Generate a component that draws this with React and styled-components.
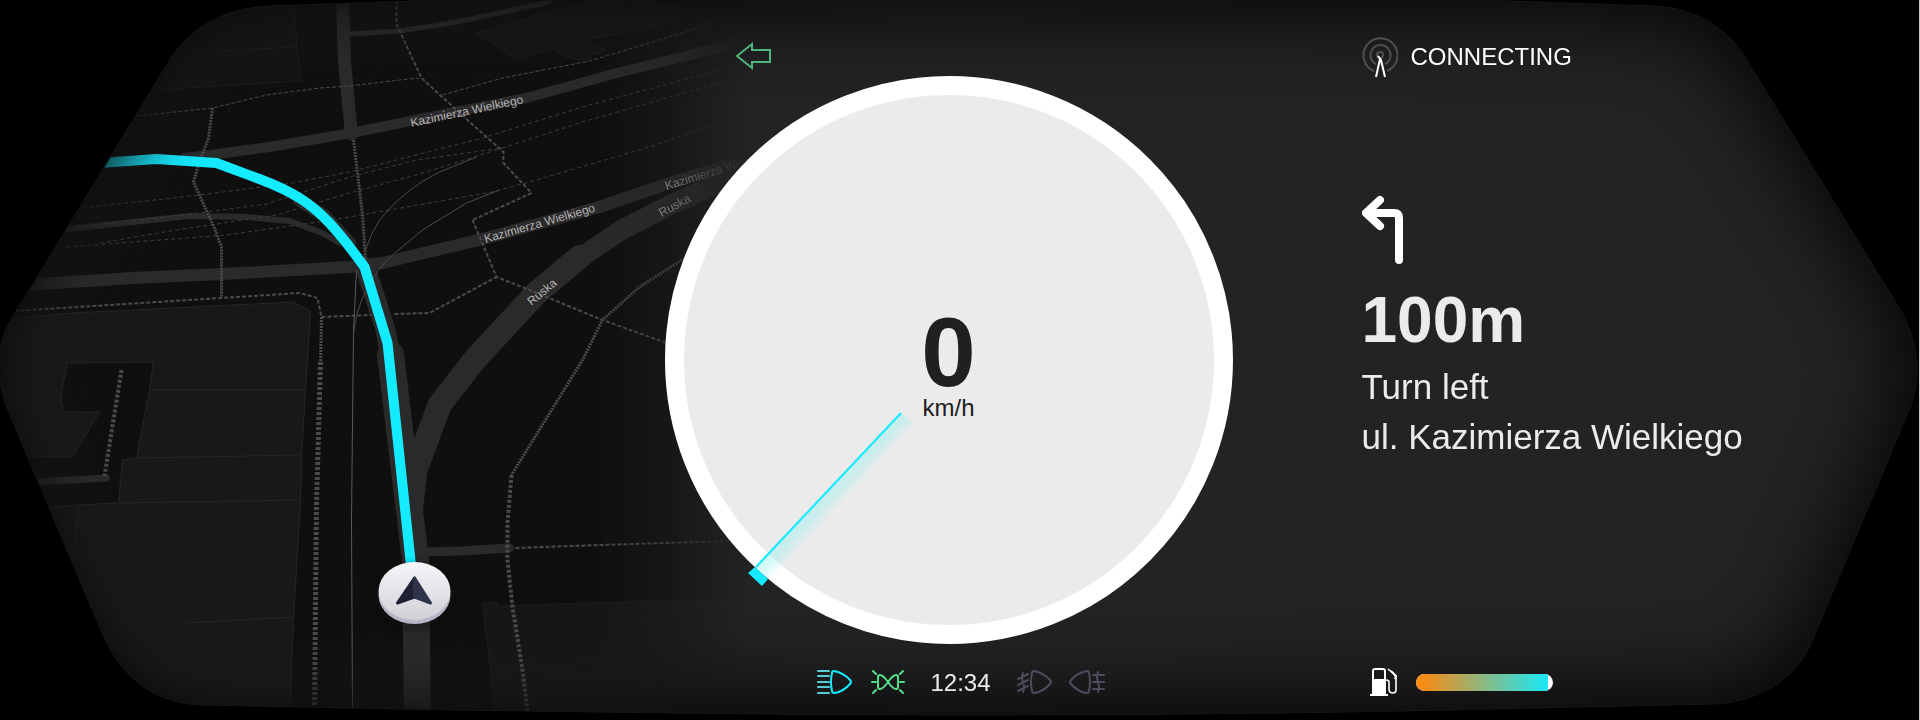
import React from "react";
import styled, { createGlobalStyle } from "styled-components";

const GlobalStyle = createGlobalStyle`
  * { box-sizing: border-box; }
  body {
    margin: 0;
    background: #000;
    font-family: "Liberation Sans", Arial, sans-serif;
    color: #ebebeb;
  }
  p, h1 { margin: 0; }
`;

const Cluster = styled.main`
  position: relative;
  display: grid;
  grid-template-columns: 665fr 568px 687fr;
  min-height: 100vh;
  overflow: hidden;
  border-right: 1px solid #c8c8c8;
`;

const Backdrop = styled.svg`
  position: absolute;
  inset: 0;
  width: 100%;
  height: 100%;
`;

const CenterColumn = styled.section`
  grid-column: 2;
  position: relative;
  display: flex;
  flex-direction: column;
  justify-content: space-between;
`;

const IndicatorBar = styled.div`
  display: flex;
  align-items: flex-start;
  height: 76px;
  padding: 36px 70px 0;
`;

const Dial = styled.div`
  position: relative;
  width: 100%;
  aspect-ratio: 1;
`;

const DialFace = styled.div`
  display: flex;
  flex-direction: column;
  align-items: center;
  justify-content: center;
  height: 100%;
  padding-top: 8px;
  border: 19px solid #fff;
  border-radius: 50%;
  background: #ebebeb;
  color: #202022;
`;

const Speed = styled.p`
  font-size: 98px;
  line-height: 88px;
  font-weight: 700;
`;

const Unit = styled.p`
  font-size: 24px;
  line-height: 24px;
`;

const Needle = styled.svg`
  position: absolute;
  inset: 0;
  width: 100%;
  height: 100%;
  overflow: visible;
`;

const StatusBar = styled.div`
  display: flex;
  align-items: center;
  gap: 26px;
  height: 76px;
  padding-left: 152px;
`;

const LampGroup = styled.div`
  display: flex;
  align-items: center;
  gap: 16px;
`;

const LampIcon = styled.svg`
  display: block;
  flex: none;
  fill: none;
  stroke: ${(p) => p.$color};
  stroke-width: 2;
  stroke-linecap: round;
  stroke-linejoin: round;
`;

const Clock = styled.time`
  font-size: 24px;
  line-height: 28px;
  padding-top: 2px;
`;

const InfoColumn = styled.section`
  grid-column: 3;
  position: relative;
  display: flex;
  flex-direction: column;
  justify-content: space-between;
  padding-left: 129px;
`;

const Connection = styled.div`
  display: flex;
  align-items: center;
  gap: 13px;
  height: 76px;
  padding-top: 38px;
  color: #fff;
  font-size: 24px;
  line-height: 28px;
`;

const Directions = styled.div`
  display: flex;
  flex-direction: column;
  padding-bottom: 64px;
  > svg { margin-bottom: 20px; }
`;

const Distance = styled.h1`
  font-size: 64px;
  line-height: 72px;
  font-weight: 700;
  margin-bottom: 6px;
`;

const Step = styled.p`
  font-size: 35px;
  line-height: 50px;
  white-space: nowrap;
`;

const Fuel = styled.div`
  display: flex;
  align-items: center;
  gap: 18px;
  height: 76px;
  padding-left: 8px;
`;

const FuelTrack = styled.div`
  width: 137px;
  height: 17px;
  border-radius: 9px;
  overflow: hidden;
  background: #fff;
`;

const FuelLevel = styled.div`
  height: 100%;
  background: linear-gradient(90deg, #f98a12 5%, #1fe6f2 97%);
`;

const HULL =
  "M270 6 C228 8 198 24 177 50 Q172 57 167 65 L28 293 C8 324 -1 334 0 372 Q1 393 7 407 L100 627 C118 672 148 702 200 705 L400 709 Q760 715 960 715 Q1200 715 1400 711 L1715 704 C1762 701 1798 678 1813 640 L1908 414 C1920 388 1922 352 1904 315 L1751 66 C1732 30 1698 8 1655 6 L1480 0 Q960 -8 440 0 Z";

const roads = [
  { w: 13, d: "M343 0 L345 62 L352 134" },
  { w: 10, d: "M185 158 L218 154 L270 147 L352 133 L450 113 L527 98 L617 73 L683 57 L735 43" },
  { w: 12, d: "M25 285 L133 278 L222 274 L350 267 L383 263 L483 239 L600 207 L667 184 L740 162" },
  { w: 6, d: "M60 230 L133 222 L190 216 L247 217 L290 221 L323 233 L340 243" },
  { w: 5, d: "M350 34 L400 31 L457 22 L550 2" },
  { w: 7, d: "M34 482 L107 478" },
  { w: 9, d: "M425 552 L460 551 L510 548" },
  { w: 13, d: "M300 200 L325 216 L350 243" },
  { w: 20, d: "M366 268 L386 330 L392 362" },
  { w: 27, d: "M391 355 L416 560 L418 720" },
  { w: 24, d: "M412 505 L416 470 L440 405 L475 360 L537 293 L580 257" },
  { w: 20, d: "M570 265 L622 230 L673 204 L720 183 L750 168" },
];

const tracks = [
  "M83 208 L200 195 L293 183 L350 172 L483 138 L583 107 L727 68",
  "M77 227 L200 213 L267 204 L350 177 L417 160 L503 148 L583 122 L730 80",
  "M100 243 L177 230 L277 215 L350 193 L420 174 L503 148",
  "M67 247 L227 235 L333 220 L350 217 L493 192 L530 182 L650 147 L723 122",
];

const paths = [
  { w: 1, d: "M137 116 L213 108 L267 95 L320 88 L350 86 L400 80 L421 78" },
  { w: 3, d: "M213 108 L209 138 L199 165 L194 182 L215 228 L222 247 L222 298" },
  { w: 2, d: "M15 311 L222 298 L300 293 L318 298 L322 317" },
  { w: 3, d: "M322 317 L321 362" },
  { w: 5, d: "M321 362 L317 503 L315 708" },
  { w: 2, d: "M322 317 L372 315 M395 314 L430 313 L497 277" },
  { w: 2, d: "M473 220 L497 277 L530 290 L603 320 L667 343" },
  { w: 2, d: "M397 0 L397 24 L422 78 L468 120 L504 152 L504 163 L532 193 L473 220" },
  { w: 1, d: "M443 95 L503 78 L590 61 L650 43 L717 22" },
  { w: 3, d: "M354 140 L363 215 L366 260" },
  { w: 3, d: "M690 255 L640 287 L603 320 L583 360 L512 475" },
  { w: 4, d: "M512 475 L508 523 L508 560 L513 607 L523 670 L528 712" },
  { w: 2, d: "M516 548 L600 545 L732 541" },
  { w: 4, d: "M122 370 L105 476" },
];

const labels = [
  { x: 412, y: 127, a: -12, t: "Kazimierza Wielkiego" },
  { x: 486, y: 243, a: -16, t: "Kazimierza Wielkiego" },
  { x: 667, y: 190, a: -17, t: "Kazimierza Wielkiego" },
  { x: 532, y: 306, a: -40, t: "Ruska" },
  { x: 662, y: 217, a: -28, t: "Ruska" },
];

function MapLayer() {
  return (
    <g clipPath="url(#hullClip)">
      <g mask="url(#mapMask)">
        <rect width="760" height="720" fill="#0f0f0f" />
        <g fill="#181818" stroke="#262626">
          <path fill="#131314" stroke="#1e1e1e" d="M120 -5 L295 -5 L297 47 L302 81 L120 92 Z M120 56 L297 47" />
          <path d="M-5 320 L72 313 L293 302 L311 311 L308 360 L306 390 L302 457 L301 502 L294 617 L290 720 L-5 720 Z" />
          <path fill="#0f0f0f" d="M68 363 L154 362 L150 390 L137 458 L123 460 L119 503 L79 505 L20 509 L20 457 L73 457 L100 412 L65 412 L61 398 Z" />
          <path fill="none" d="M150 390 H306 M137 458 L302 455 M119 503 L301 500 M186 623 L294 617 M79 505 L74 560" />
          <path fill="#161617" stroke="#1e1e1e" d="M483 603 L498 603 L498 606 L683 600 L770 598 L770 720 L497 720 Z" />
          <path fill="#131414" stroke="#1c1d1d" d="M540 15 L477 33 L517 60 L553 49 Q567 61 590 59 L592 55 L607 50 L587 39 L657 27 L700 10 L610 -5 Z" />
        </g>
        <g fill="none" stroke="#2b2a2b" strokeLinejoin="round" strokeLinecap="round">
          {roads.map((r) => <path key={r.d} d={r.d} strokeWidth={r.w} />)}
        </g>
        <g fill="none" stroke="#3c3c3c" strokeWidth="1" strokeDasharray="4 3">
          {tracks.map((d) => <path key={d} d={d} />)}
        </g>
        <g fill="none" stroke="#4a4a4a">
          {paths.map((p) => (
            <path key={p.d} d={p.d} strokeWidth={p.w} strokeDasharray={p.w > 3 ? "3 2" : p.w > 2 ? "2 1" : "4 2"} />
          ))}
        </g>
        <g fill="none" stroke="#4b4b4b">
          <path d="M357 270 L354 330 L352 520 L353 712" stroke="#5a5a5a" />
          <path d="M366 250 Q370 236 380 220 Q406 188 440 172 L477 157" />
          <path d="M354 333 Q357 308 367 290 Q378 268 393 255 L423 230 L467 203 L500 190" />
        </g>
        <path
          d="M100 163 L157 159 L217 163 L260 179 Q284 188 300 198 Q316 208 330 223 Q344 238 365 267 L388 343 L412 570"
          fill="none" stroke="#14ebff" strokeWidth="10" strokeLinejoin="round"
        />
        <g fill="#b4b4b4" fontSize="12" fontFamily='"Liberation Sans", Arial, sans-serif'>
          {labels.map((l) => (
            <text key={l.x} transform={`translate(${l.x} ${l.y}) rotate(${l.a})`}>{l.t}</text>
          ))}
        </g>
      </g>
      <ellipse cx="415" cy="596" rx="40" ry="32" fill="#08080c" opacity="0.5" filter="url(#soft)" />
      <ellipse cx="415" cy="595" rx="36" ry="29" fill="#b7b5c6" />
      <ellipse cx="415" cy="591" rx="36" ry="29" fill="url(#puck)" />
      <g strokeWidth="3" strokeLinejoin="round">
        <path d="M415 578 L398 603 L415 597 Z" fill="#1e2133" stroke="#1e2133" />
        <path d="M415 578 L431 603 L415 597 Z" fill="#2f334a" stroke="#2f334a" />
      </g>
    </g>
  );
}

function Scene() {
  return (
    <Backdrop viewBox="0 0 1920 720" preserveAspectRatio="xMidYMid slice" aria-hidden="true">
      <defs>
        <clipPath id="hullClip"><path d={HULL} /></clipPath>
        <filter id="inset" filterUnits="userSpaceOnUse" x="-200" y="-200" width="2320" height="1120">
          <feGaussianBlur stdDeviation="48" />
        </filter>
        <filter id="edge" filterUnits="userSpaceOnUse" x="-200" y="-200" width="2320" height="1120">
          <feGaussianBlur stdDeviation="34" />
        </filter>
        <filter id="soft"><feGaussianBlur stdDeviation="4" /></filter>
        <linearGradient id="mapFade" gradientUnits="userSpaceOnUse" x1="0" x2="760" y1="0" y2="0">
          <stop offset="0" stopColor="#fff" />
          <stop offset="0.78" stopColor="#fff" />
          <stop offset="0.88" stopColor="#999" />
          <stop offset="0.98" stopColor="#000" />
        </linearGradient>
        <mask id="mapMask" maskUnits="userSpaceOnUse" x="0" y="0" width="760" height="720">
          <rect width="760" height="720" fill="url(#mapFade)" />
          <path
            d={`M-400 -400 H2400 V1200 H-400 Z ${HULL}`}
            fillRule="evenodd" stroke="#000" strokeWidth="28" filter="url(#edge)"
          />
        </mask>
        <linearGradient id="puck" x1="0" x2="0" y1="0" y2="1">
          <stop offset="0" stopColor="#f6f6fa" />
          <stop offset="1" stopColor="#cfcfd5" />
        </linearGradient>
      </defs>
      <g clipPath="url(#hullClip)">
        <rect width="1920" height="720" fill="#232325" />
        <path
          d={`M-400 -400 H2400 V1200 H-400 Z ${HULL}`}
          fillRule="evenodd" stroke="#000" strokeWidth="12" filter="url(#inset)"
        />
      </g>
      <MapLayer />
      <path d={HULL} fill="none" stroke="#161617" strokeWidth="1" />
    </Backdrop>
  );
}

const LAMP = "M17 2 Q15 2 15 4 Q13 13 15 22 Q15 24 18 24 Q27 22 33 15 Q35 13 33 11 Q27 4 17 2 Z";

export default function App() {
  return (
    <>
      <GlobalStyle />
      <Cluster>
        <Scene />
        <CenterColumn>
          <IndicatorBar>
            <svg width="37" height="40" viewBox="0 0 37 40" role="img" aria-label="Left indicator" fill="none" stroke="#4cb47c" strokeWidth="2">
              <path d="M2 20 L17 8 V14 H35 V26 H17 V32 Z" />
            </svg>
          </IndicatorBar>
          <Dial>
            <DialFace>
              <Speed>0</Speed>
              <Unit>km/h</Unit>
            </DialFace>
            <Needle viewBox="0 0 568 568" aria-hidden="true">
              <defs>
                <linearGradient id="glow" gradientUnits="userSpaceOnUse" x1="164" y1="414" x2="178" y2="427">
                  <stop offset="0" stopColor="#9ff0f0" stopOpacity="0.5" />
                  <stop offset="0.45" stopColor="#9ff0f0" stopOpacity="0.38" />
                  <stop offset="1" stopColor="#9ff0f0" stopOpacity="0" />
                </linearGradient>
              </defs>
              <path d="M236 337 L248 346 L109 509 L91 491 Z" fill="url(#glow)" />
              <path d="M236 337 L91 491" stroke="#14ebff" strokeWidth="2" />
              <path d="M83 497 L90 491 L103 503 L97 510 Z" fill="#14ebff" />
            </Needle>
          </Dial>
          <StatusBar>
            <LampGroup>
              <LampIcon width="36" height="26" viewBox="0 0 36 26" $color="#14ebff" role="img" aria-label="Low beam">
                <path d={LAMP} />
                <path stroke="#55cdd6" d="M1 2 H12 M1 7 H12 M1 13 H12 M1 18 H12 M1 24 H12" />
              </LampIcon>
              <LampIcon width="36" height="26" viewBox="-2 0 36 26" $color="#55e08d" role="img" aria-label="Position lights">
                <path d="M9 6 Q7 6 7 8 V18 Q7 20 9 20 Q12 20 17 13 Q22 6 25 6 Q27 6 27 8 V18 Q27 20 25 20 Q22 20 17 13 Q12 6 9 6 Z" />
                <path d="M2 2 L5 5 M1 13 H5 M2 24 L5 21 M32 2 L29 5 M33 13 H29 M32 24 L29 21" />
              </LampIcon>
            </LampGroup>
            <Clock>12:34</Clock>
            <LampGroup>
              <LampIcon width="36" height="26" viewBox="0 0 36 26" $color="#4e4b5c" role="img" aria-label="Front fog lights">
                <path d={LAMP} />
                <path d="M1 10 L11 5 M1 16 L11 11 M1 22 L11 17 M6 4 Q4 9 6 13 Q8 18 6 23" />
              </LampIcon>
              <LampIcon width="36" height="26" viewBox="0 0 36 26" $color="#4e4b5c" role="img" aria-label="Rear fog lights">
                <path transform="matrix(-1 0 0 1 35 0)" d={LAMP} />
                <path d="M24 6 H35 M24 13 H35 M24 20 H35 M29 3 Q27 8 29 13 Q31 18 29 23" />
              </LampIcon>
            </LampGroup>
          </StatusBar>
        </CenterColumn>
        <InfoColumn>
          <Connection>
            <svg width="36" height="42" viewBox="0 0 36 42" aria-hidden="true" fill="none" strokeWidth="2">
              <g stroke="#4f4f51">
                <path d="M12 35 A17 17 0 1 1 25 35" />
                <path d="M14 28 A10 10 0 1 1 23 28" />
                <circle cx="18" cy="19" r="3" />
              </g>
              <path stroke="#fff" d="M16 20 L19 24 L23 41 M18 23 L14 41" />
            </svg>
            <span>CONNECTING</span>
          </Connection>
          <Directions>
            <svg width="44" height="70" viewBox="0 0 44 70" role="img" aria-label="Turn left" fill="none" stroke="#fff" strokeWidth="8" strokeLinecap="round" strokeLinejoin="round">
              <path d="M18 6 L4 19 L18 32 M5 19 H32 Q37 19 37 24 V66" />
            </svg>
            <Distance>100m</Distance>
            <Step>Turn left</Step>
            <Step>ul. Kazimierza Wielkiego</Step>
          </Directions>
          <Fuel>
            <svg width="28" height="30" viewBox="0 0 28 30" aria-hidden="true" fill="none" stroke="#fff" strokeWidth="2">
              <path fill="#fff" stroke="none" d="M2 12 H16 V27 H18 V29 H0 V27 H2 Z" />
              <path d="M3 14 V4 Q3 2 5 2 H13 Q15 2 15 4 V14" />
              <path strokeWidth="1.6" d="M18 2 L24 7 Q26 9 26 12 V23 Q26 26 23 26 Q19 26 19 22 V15 Q19 13 16 13" />
              <path d="M21 4 L26 9 L25 12" />
            </svg>
            <FuelTrack role="meter" aria-label="Fuel level" aria-valuemin={0} aria-valuemax={100} aria-valuenow={97}>
              <FuelLevel style={{ width: "97%" }} />
            </FuelTrack>
          </Fuel>
        </InfoColumn>
      </Cluster>
    </>
  );
}
